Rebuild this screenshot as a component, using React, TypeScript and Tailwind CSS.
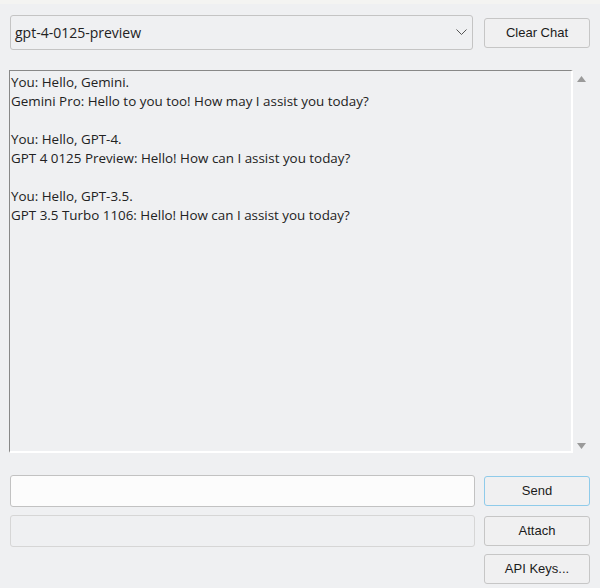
const LINES = [
  "You: Hello, Gemini.",
  "Gemini Pro: Hello to you too! How may I assist you today?",
  "",
  "You: Hello, GPT-4.",
  "GPT 4 0125 Preview: Hello! How can I assist you today?",
  "",
  "You: Hello, GPT-3.5.",
  "GPT 3.5 Turbo 1106: Hello! How can I assist you today?",
];

const uiFont = "font-['Open_Sans','Noto_Sans',sans-serif]";
const btnFont = "font-['Liberation_Sans',Arial,sans-serif]";

function Btn({ label, focus }: { label: string; focus?: boolean }) {
  return (
    <button
      className={`w-[106px] h-[30px] rounded-[3px] border bg-[#f0f0f1] text-[13px] text-[#1b1b1b] ${btnFont} ${
        focus ? "border-[#8fcbea]" : "border-[#c6c6c6]"
      }`}
    >
      {label}
    </button>
  );
}

export default function App() {
  return (
    <div className="w-[600px] h-[588px] bg-[#eff0f2] flex flex-col overflow-hidden">
      {/* window top edge */}
      <div className="h-[4px] bg-[#f4f4f2]" />

      {/* Model picker */}
      <div className="flex items-center gap-[11px] pl-[10px] pr-[10px] mt-[11px]">
        <div
          className={`flex-1 h-[35px] rounded-[3px] border border-[#c4c4c4] flex items-center justify-between pl-[4px] pr-[5px] text-[14px] text-[#222] ${uiFont}`}
        >
          <span>gpt-4-0125-preview</span>
          <svg width="11" height="7" viewBox="0 0 11 7">
            <path d="M0.5 0.5 L5.5 5.5 L10.5 0.5" fill="none" stroke="#555" strokeWidth="1" />
          </svg>
        </div>
        <Btn label="Clear Chat" />
      </div>

      {/* Transcript */}
      <div className="flex mt-[20px] pl-[9px] pr-[10px] h-[383px]">
        <div
          className={`flex-1 border-t border-l border-[#888] border-r-2 border-b-2 border-r-white border-b-white pt-[2px] pl-[1px] text-[13.4px] leading-[19px] text-[#222] ${uiFont}`}
        >
          {LINES.map((l, i) => (
            <div key={i} className="h-[19px] whitespace-pre">
              {l}
            </div>
          ))}
        </div>
        <div className="w-[17px] flex flex-col items-center justify-between pt-[6px] pb-[4px]">
          <svg width="9" height="6" viewBox="0 0 9 6">
            <path d="M0 6 L4.5 0 L9 6 Z" fill="#9a9a9a" />
          </svg>
          <svg width="9" height="6" viewBox="0 0 9 6">
            <path d="M0 0 L9 0 L4.5 6 Z" fill="#9a9a9a" />
          </svg>
        </div>
      </div>

      {/* Input + actions */}
      <div className="grid grid-cols-[1fr_106px] gap-x-[9px] pl-[10px] pr-[10px] mt-[22px]">
        <input className="h-[32px] rounded-[3px] border border-[#c2c2c2] bg-[#fcfcfc] outline-none" />
        <div className="pt-[1px]">
          <Btn label="Send" focus />
        </div>

        <div className="h-[32px] mt-[8px] rounded-[3px] border border-[#d6d6d6]" />
        <div className="mt-[9px]">
          <Btn label="Attach" />
        </div>

        <div />
        <div className="mt-[7px]">
          <Btn label="API Keys..." />
        </div>
      </div>
    </div>
  );
}
